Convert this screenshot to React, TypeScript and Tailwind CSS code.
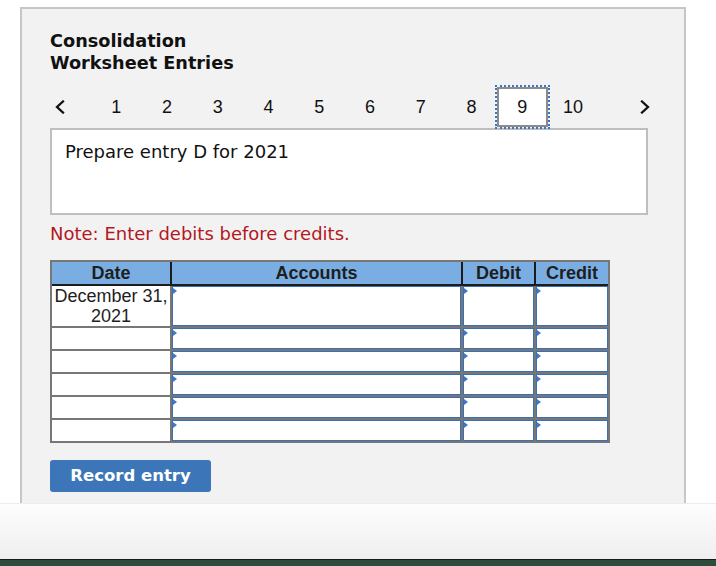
import React from "react";

const PAGES = ["1", "2", "3", "4", "5", "6", "7", "8", "9", "10"];
const ROWS = 6;

const verdana = { fontFamily: "'DejaVu Sans', Verdana, sans-serif" };

const Chevron = ({ dir }: { dir: "left" | "right" }) => (
  <svg width="12" height="14" viewBox="0 0 12 14" fill="none">
    <polyline
      points={dir === "left" ? "9,1.5 3,7 9,12.5" : "3,1.5 9,7 3,12.5"}
      stroke="#111"
      strokeWidth="2.3"
      strokeLinecap="square"
    />
  </svg>
);

const InputCell = ({ tall }: { tall?: boolean }) => (
  <div className={`relative bg-white border border-[#3d6fb3] ${tall ? "h-[40px]" : "h-[21px]"}`}>
    <span className="absolute left-0 top-[1px] w-0 h-0 border-y-[3px] border-y-transparent border-l-[4px] border-l-[#3d79c4]" />
  </div>
);

export default function App() {
  return (
    <div className="w-[716px] h-[566px] bg-white flex flex-col overflow-hidden">
      <div className="h-[503px] pl-[20px] pt-[7px]">
        <div
          className="w-[666px] h-[496px] bg-[#f2f2f2] border-2 border-b-0 border-[#c6c6c6] pl-[28px] pt-[21px]"
          style={verdana}
        >
          <h1 className="text-[17.7px] leading-[22px] font-bold text-[#111]">
            Consolidation
            <br />
            Worksheet Entries
          </h1>

          <div className="mt-[11px] h-[44px] flex items-center font-['Liberation_Sans',Arial,sans-serif] text-[18px] text-[#111]">
            <div className="w-[20px] flex justify-center">
              <Chevron dir="left" />
            </div>
            <div className="ml-[21px] flex items-center">
              {PAGES.map((p) =>
                p === "9" ? (
                  <div key={p} className="w-[50.75px] flex justify-center">
                    <div className="shrink-0 w-[51px] h-[40px] bg-white border-2 border-[#8c8c8c] outline-2 outline-dotted outline-[#3b76c2] flex items-center justify-center">
                      {p}
                    </div>
                  </div>
                ) : (
                  <div key={p} className="w-[50.75px] text-center">
                    {p}
                  </div>
                )
              )}
            </div>
            <div className="ml-[36.5px] w-[20px] flex justify-center">
              <Chevron dir="right" />
            </div>
          </div>

          <div className="-mt-[1px] w-[598px] h-[87px] bg-white border-2 border-[#bfbfbf] pl-[13px] pt-[11px] text-[18px] leading-[22px] text-[#111]">
            Prepare entry D for 2021
          </div>

          <p className="mt-[8px] text-[18px] leading-[22px] text-[#b3171f]">
            Note: Enter debits before credits.
          </p>

          <div className="mt-[15px] w-[560px] border-2 border-[#777] bg-[#777] font-['Liberation_Sans',Arial,sans-serif] text-[18px] text-[#1e1e1e]">
            <div className="grid grid-cols-[118px_289px_71px_72px] gap-x-[2px] bg-[#1c1c1c] border-b-2 border-[#1c1c1c]">
              {["Date", "Accounts", "Debit", "Credit"].map((h) => (
                <div key={h} className="h-[22px] leading-[22px] bg-[#7aaee2] text-center font-bold">
                  {h}
                </div>
              ))}
            </div>
            <div className="grid grid-cols-[118px_289px_71px_72px] gap-[2px]">
              {Array.from({ length: ROWS }).map((_, i) => (
                <React.Fragment key={i}>
                  <div className={`bg-white text-center leading-[20px] ${i === 0 ? "h-[40px]" : "h-[21px]"}`}>
                    {i === 0 ? (
                      <>
                        December 31,
                        <br />
                        2021
                      </>
                    ) : null}
                  </div>
                  <InputCell tall={i === 0} />
                  <InputCell tall={i === 0} />
                  <InputCell tall={i === 0} />
                </React.Fragment>
              ))}
            </div>
          </div>

          <button className="mt-[17px] w-[161px] h-[32px] rounded-[3px] bg-[#3c76b9] text-white font-bold text-[16.5px]">
            Record entry
          </button>
        </div>
      </div>
      <div className="h-[56px] border-t border-[#ececec] bg-gradient-to-b from-[#fdfdfd] to-[#efefef]" />
      <div className="h-[1px] bg-[#1b1b1b]" />
      <div className="flex-1 bg-[#2d4b3f]" />
    </div>
  );
}
